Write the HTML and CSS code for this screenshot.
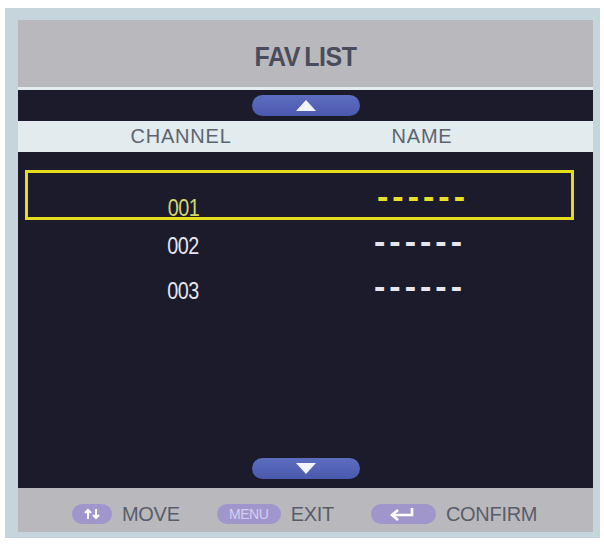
FILE: index.html
```html
<!DOCTYPE html>
<html>
<head>
<meta charset="utf-8">
<link rel="stylesheet" href="styles.css">
</head>
<body>
<div class="frame">
  <div class="panel">
    <div class="header"><h1 class="title">FAV LIST</h1></div>
    <div class="scrollbar top">
      <span class="pill">
        <svg width="20" height="11" viewBox="0 0 20 11"><polygon points="10,0 20,11 0,11" fill="#f2f4ff"/></svg>
      </span>
    </div>
    <div class="colhead">
      <span class="col-ch">CHANNEL</span>
      <span class="col-name">NAME</span>
    </div>
    <div class="list">
      <div class="row selected">
        <span class="ch">001</span>
        <span class="name">------</span>
      </div>
      <div class="row">
        <span class="ch">002</span>
        <span class="name">------</span>
      </div>
      <div class="row">
        <span class="ch">003</span>
        <span class="name">------</span>
      </div>
      <div class="scrollbar bottom">
        <span class="pill">
          <svg width="20" height="11" viewBox="0 0 20 11"><polygon points="0,0 20,0 10,11" fill="#f2f4ff"/></svg>
        </span>
      </div>
    </div>
    <div class="footer">
      <div class="hint">
        <span class="key key-move">
          <svg width="18" height="12" viewBox="0 0 18 12">
            <path d="M5 11V2M2 5l3-3 3 3" stroke="#fff" stroke-width="2" fill="none"/>
            <path d="M13 1v9M10 7l3 3 3-3" stroke="#fff" stroke-width="2" fill="none"/>
          </svg>
        </span>
        <span class="label">MOVE</span>
      </div>
      <div class="hint">
        <span class="key key-menu">MENU</span>
        <span class="label">EXIT</span>
      </div>
      <div class="hint">
        <span class="key key-enter">
          <svg width="30" height="14" viewBox="0 0 30 14">
            <path d="M24 1v7H5" stroke="#fff" stroke-width="2.6" fill="none"/>
            <path d="M10 3L4 8l6 5" stroke="#fff" stroke-width="2.6" fill="none"/>
          </svg>
        </span>
        <span class="label">CONFIRM</span>
      </div>
    </div>
  </div>
</div>
</body>
</html>
```
FILE: styles.css
```css
html, body {
  margin: 0;
  padding: 0;
  background: #ffffff;
}
body {
  font-family: "Liberation Sans", Arial, sans-serif;
}
.frame {
  margin: 8px 4px 0 5px;
  height: 530px;
  box-sizing: border-box;
  padding: 12px 7px 6px 13px;
  background: #c6d4db;
}
.panel {
  display: flex;
  flex-direction: column;
  height: 512px;
  background: #b9b9bd;
}
.header {
  height: 67px;
  display: flex;
  align-items: center;
  justify-content: center;
  border-bottom: 3px solid #e4ecef;
}
.title {
  margin: 0;
  font-size: 25px;
  font-weight: bold;
  color: #4a4c5b;
  letter-spacing: -0.5px;
  word-spacing: -2px;
  padding-top: 6px;
  transform: scaleY(1.08);
}
.scrollbar {
  display: flex;
  justify-content: center;
  align-items: center;
}
.scrollbar.top {
  height: 31px;
  background: #1c1b2c;
}
.scrollbar.bottom {
  margin-top: auto;
  margin-bottom: 9px;
  height: 21px;
}
.pill {
  width: 108px;
  height: 21px;
  border-radius: 11px;
  background: linear-gradient(#5d6dc0, #4a59ad);
  display: flex;
  align-items: center;
  justify-content: center;
}
.colhead {
  height: 31px;
  background: #e2ecef;
  display: grid;
  grid-template-columns: 326px 156px;
  align-items: center;
  text-align: center;
  font-size: 20px;
  letter-spacing: 0.8px;
  color: #5d6470;
}
.list {
  flex: 1;
  background: #1c1b2c;
  display: flex;
  flex-direction: column;
  padding-top: 18px;
}
.row {
  height: 45px;
  display: grid;
  grid-template-columns: 330px 140px;
  align-items: center;
  text-align: center;
  color: #e6e6ee;
}
.row.selected {
  height: 50px;
  box-sizing: border-box;
  margin: 0 19px 0 7px;
  border: 3px solid #e4dc1c;
  grid-template-columns: 311px 164px;
  color: #d6d66e;
}
.ch {
  display: inline-block;
  font-size: 23px;
  letter-spacing: -0.5px;
  padding-top: 8px;
  transform: scaleX(0.86);
}
.row.selected .ch {
  padding-top: 22px;
}
.name {
  font-size: 34px;
  font-weight: bold;
  letter-spacing: 4px;
  line-height: 20px;
  margin-left: 4px;
  padding-bottom: 4px;
}
.row.selected .name {
  color: #e6e028;
}
.footer {
  height: 44px;
  display: flex;
  align-items: center;
  padding: 8px 0 0 54px;
  box-sizing: border-box;
  gap: 37px;
  color: #5a5d69;
}
.hint {
  display: flex;
  align-items: center;
  gap: 10px;
}
.key {
  height: 20px;
  border-radius: 10px;
  background: #a196cc;
  display: flex;
  align-items: center;
  justify-content: center;
}
.key-move { width: 40px; }
.key-menu {
  width: 64px;
  font-size: 14px;
  color: #d4cdf0;
  letter-spacing: -0.5px;
}
.key-enter { width: 65px; }
.label {
  font-size: 20px;
  letter-spacing: -0.3px;
}
```
